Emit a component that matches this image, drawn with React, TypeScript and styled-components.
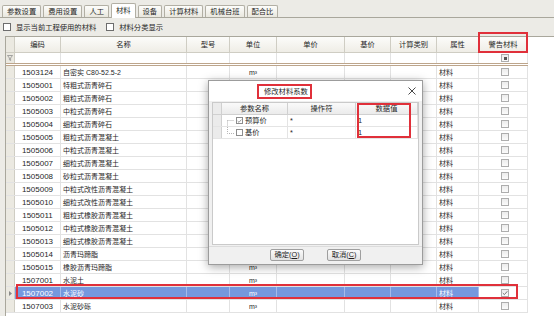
import React from 'react'
import styled, {createGlobalStyle, css} from 'styled-components'

const colors = {
  page: '#ecebe6',
  text: '#1f1f1f',
  gridLine: '#e2e2e2',
  headLine: '#cfcdc3',
  indicator: '#ebe9e1',
  frame: '#a9a79c',
  select: '#7598de',
  red: '#e0303a',
  tan: '#bda58b',
}

const font = `"Liberation Sans", "Noto Sans CJK SC", sans-serif`

const GlobalStyle = createGlobalStyle`
  html, body {
    margin: 0;
    padding: 0;
    background: ${colors.page};
  }
  body {
    font-family: ${font};
    font-size: 7.3px;
    color: ${colors.text};
  }
`

const Screen = styled.div`
  position: relative;
  width: 554px;
  height: 316px;
  overflow: hidden;
  display: flex;
  flex-direction: column;
  background: ${colors.page};
`

// ---- tabs ----
const TabStrip = styled.div`
  display: flex;
  align-items: flex-end;
  gap: 2px;
  height: 17px;
  padding-left: 2px;
  border-bottom: 1px solid ${colors.frame};
  flex: none;
`

const Tab = styled.div<{$active?: boolean}>`
  position: relative;
  height: ${_ => (_.$active ? 15 : 12)}px;
  line-height: ${_ => (_.$active ? 14 : 12)}px;
  padding: 0 4px;
  box-sizing: border-box;
  border: 1px solid #b2afa4;
  border-bottom: none;
  border-radius: 2px 2px 0 0;
  background: ${_ => (_.$active ? '#ffffff' : 'linear-gradient(#fdfdfb, #e9e7de)')};
  margin-bottom: ${_ => (_.$active ? -1 : 0)}px;
  white-space: nowrap;
`

// ---- option bar ----
const OptionBar = styled.div`
  display: flex;
  align-items: center;
  gap: 10px;
  height: 18px;
  padding-left: 3px;
  flex: none;
`

const Option = styled.label`
  display: flex;
  align-items: center;
  gap: 5px;
  white-space: nowrap;
`

const Box = styled.span`
  width: 8px;
  height: 8px;
  box-sizing: border-box;
  border: 1px solid #6d6d6d;
  background: #fff;
  flex: none;
`

// ---- main grid ----
const Grid = styled.div`
  flex: 1;
  margin-left: 5px;
  background: #fff;
  border-top: 1px solid ${colors.frame};
  border-left: 1px solid ${colors.frame};
  display: flex;
  flex-direction: column;
`

const HeadRow = styled.div`
  display: flex;
  width: 522px;
  height: 16px;
  box-sizing: border-box;
  border-bottom: 1px solid ${colors.headLine};
  background: linear-gradient(#fcfcfa, #efede6);
`

const HeadCell = styled.div<{$w: number; $mark?: boolean}>`
  position: relative;
  flex: none;
  width: ${_ => _.$w}px;
  box-sizing: border-box;
  border-right: 1px solid ${colors.headLine};
  text-align: center;
  line-height: 15px;
  white-space: nowrap;
  ${_ =>
    _.$mark &&
    css`
      &::after {
        content: '';
        position: absolute;
        left: -1px;
        right: -1px;
        top: -5px;
        bottom: -1px;
        border: 2px solid ${colors.red};
      }
    `}
`

const FilterRow = styled.div`
  display: flex;
  width: 522px;
  height: 13px;
  box-sizing: border-box;
  border-bottom: 3px double ${colors.tan};
`

const Row = styled.div<{$sel?: boolean}>`
  position: relative;
  display: flex;
  width: 522px;
  height: 13px;
  box-sizing: border-box;
  border-bottom: 1px solid ${colors.gridLine};
  ${_ =>
    _.$sel &&
    css`
      &::after {
        content: '';
        position: absolute;
        left: 10px;
        right: 10px;
        top: -3px;
        bottom: 0;
        border: 2px solid ${colors.red};
      }
    `}
`

const Cell = styled.div<{$w: number; $align?: 'left' | 'center'; $hi?: boolean; $size?: number}>`
  flex: none;
  width: ${_ => _.$w}px;
  box-sizing: border-box;
  padding: 0 2px;
  border-right: 1px solid ${_ => (_.$hi ? '#a5bbec' : colors.gridLine)};
  background: ${_ => (_.$hi ? colors.select : 'transparent')};
  color: ${_ => (_.$hi ? '#ffffff' : colors.text)};
  font-size: ${_ => _.$size ?? 7}px;
  line-height: 13px;
  text-align: ${_ => _.$align ?? 'left'};
  white-space: nowrap;
  overflow: hidden;
`

const IndCell = styled.div`
  flex: none;
  width: 9px;
  box-sizing: border-box;
  background: ${colors.indicator};
  border-right: 1px solid ${colors.headLine};
  display: flex;
  align-items: center;
  justify-content: center;
`

const CheckCell = styled.div`
  flex: none;
  width: 49px;
  box-sizing: border-box;
  border-right: 1px solid ${colors.gridLine};
  display: flex;
  align-items: center;
  justify-content: center;
  padding-left: 4px;
`

const MiniBox = styled.span`
  width: 8px;
  height: 8px;
  box-sizing: border-box;
  border: 1px solid #adadad;
  background: linear-gradient(#ececec, #fbfbfb);
  display: flex;
  align-items: center;
  justify-content: center;
`

const Dot = styled.span`
  width: 3px;
  height: 3px;
  background: #555;
`

// ---- dialog ----
const Dialog = styled.div`
  position: absolute;
  left: 208px;
  top: 80px;
  width: 215px;
  height: 185px;
  box-sizing: border-box;
  border: 1px solid #9c9c9c;
  background: #f0f0f0;
  box-shadow: 0 2px 9px rgba(0, 0, 0, 0.35);
  display: flex;
  flex-direction: column;
`

const TitleBar = styled.div`
  height: 20px;
  flex: none;
  display: flex;
  align-items: center;
  padding-left: 48px;
  padding-right: 6px;
  background: #fff;
`

const Title = styled.span`
  height: 15px;
  line-height: 11px;
  padding: 0 2px 0 5px;
  box-sizing: border-box;
  border: 2px solid ${colors.red};
  font-size: 7.3px;
`

const Close = styled.span`
  margin-left: auto;
  display: flex;
`

const DlgBody = styled.div`
  flex: 1;
  padding: 1px 3px 1px 3px;
  display: flex;
`

const DlgGrid = styled.div`
  flex: 1;
  background: #fff;
  border: 1px solid #cacaca;
  display: flex;
  flex-direction: column;
`

const DlgHead = styled.div`
  display: flex;
  height: 12px;
  flex: none;
  box-sizing: border-box;
  border-bottom: 1px solid #d0d0d0;
  background: linear-gradient(#fafafa, #ebebeb);
`

const DlgHeadCell = styled.div<{$w: number; $mark?: boolean}>`
  position: relative;
  z-index: 1;
  flex: none;
  width: ${_ => _.$w}px;
  box-sizing: border-box;
  border-right: 1px solid #d0d0d0;
  text-align: center;
  line-height: 11px;
  ${_ =>
    _.$mark &&
    css`
      &::after {
        content: '';
        position: absolute;
        left: 1px;
        width: 54px;
        top: 0;
        height: 35px;
        box-sizing: border-box;
        border: 2px solid ${colors.red};
      }
    `}
`

const DlgRow = styled.div`
  display: flex;
  height: 12px;
  flex: none;
  box-sizing: border-box;
  border-bottom: 1px solid #e4e4e4;
`

const DlgCell = styled.div<{$w: number}>`
  flex: none;
  width: ${_ => _.$w}px;
  box-sizing: border-box;
  border-right: 1px solid #e4e4e4;
  padding-left: 2px;
  line-height: 11px;
  display: flex;
  align-items: center;
`

const DlgInd = styled.div`
  flex: none;
  width: 9px;
  box-sizing: border-box;
  background: #ebebeb;
  border-right: 1px solid #d0d0d0;
`

const TreeBox = styled.span`
  width: 7px;
  height: 7px;
  box-sizing: border-box;
  border: 1px solid #8d8d8d;
  background: #fff;
  margin: 0 2px 0 1px;
  display: flex;
  align-items: center;
  justify-content: center;
  flex: none;
`

const Footer = styled.div`
  height: 18px;
  flex: none;
  box-sizing: border-box;
  border-top: 1px solid #dcdcdc;
  display: flex;
  align-items: center;
  justify-content: center;
  gap: 23px;
  padding-bottom: 1px;
`

const Button = styled.button`
  width: 34px;
  height: 12px;
  padding: 0;
  box-sizing: border-box;
  border: 1px solid #9f9f9f;
  border-radius: 2px;
  background: linear-gradient(#fbfbfb, #e3e3e3);
  font-family: ${font};
  font-size: 7.3px;
  line-height: 10px;
  color: ${colors.text};
`

// ---- icons ----
const Funnel = () => (
  <svg width="6" height="6" viewBox="0 0 6 6">
    <path d="M0.5 0.5H5.5L3.6 3V5.5L2.4 4.8V3Z" fill="none" stroke="#909090" strokeWidth="0.8" />
  </svg>
)

const Tick = ({c = '#555'}: {c?: string}) => (
  <svg width="6" height="6" viewBox="0 0 6 6">
    <path d="M0.8 3.1L2.4 4.6L5.3 1.3" fill="none" stroke={c} strokeWidth="0.9" />
  </svg>
)

const Arrow = () => (
  <svg width="3" height="5" viewBox="0 0 3 5">
    <path d="M0 0L3 2.5L0 5Z" fill="#8a8a8a" />
  </svg>
)

const Cross = () => (
  <svg width="8" height="8" viewBox="0 0 8 8">
    <path d="M0.5 0.5L7.5 7.5M7.5 0.5L0.5 7.5" stroke="#333" strokeWidth="0.9" />
  </svg>
)

const Branch = ({first}: {first?: boolean}) => (
  <svg width="9" height="11" viewBox="0 0 9 11" style={{flex: 'none', marginLeft: 2}}>
    <path
      d={first ? 'M1.5 5.5H8M1.5 5.5V11' : 'M1.5 0V6.5H8'}
      fill="none"
      stroke="#a0a0a0"
      strokeWidth="0.8"
      strokeDasharray="1 1"
    />
  </svg>
)

// ---- data ----
const tabs = ['参数设置', '费用设置', '人工', '材料', '设备', '计算材料', '机械台班', '配合比']

const columns = [
  {title: '编码', w: 46},
  {title: '名称', w: 126},
  {title: '型号', w: 43},
  {title: '单位', w: 47},
  {title: '单价', w: 68},
  {title: '基价', w: 46},
  {title: '计算类别', w: 46},
  {title: '属性', w: 42},
]

const rows: [string, string][] = [
  ['1503124', '自密实 C80-52.5-2'],
  ['1505001', '特粗式沥青碎石'],
  ['1505002', '粗粒式沥青碎石'],
  ['1505003', '中粒式沥青碎石'],
  ['1505004', '细粒式沥青碎石'],
  ['1505005', '粗粒式沥青混凝土'],
  ['1505006', '中粒式沥青混凝土'],
  ['1505007', '细粒式沥青混凝土'],
  ['1505008', '砂粒式沥青混凝土'],
  ['1505009', '中粒式改性沥青混凝土'],
  ['1505010', '细粒式改性沥青混凝土'],
  ['1505011', '粗粒式橡胶沥青混凝土'],
  ['1505012', '中粒式橡胶沥青混凝土'],
  ['1505013', '细粒式橡胶沥青混凝土'],
  ['1505014', '沥青玛蹄脂'],
  ['1505015', '橡胶沥青玛蹄脂'],
  ['1507001', '水泥土'],
  ['1507002', '水泥砂'],
  ['1507003', '水泥砂砾'],
]

const SELECTED = '1507002'

const params = [
  {name: '预算价', on: true},
  {name: '基价', on: false},
]

function MaterialGrid() {
  return (
    <Grid>
      <HeadRow>
        <IndCell />
        {columns.map(c => (
          <HeadCell key={c.title} $w={c.w}>
            {c.title}
          </HeadCell>
        ))}
        <HeadCell $w={49} $mark>
          警告材料
        </HeadCell>
      </HeadRow>
      <FilterRow>
        <IndCell>
          <Funnel />
        </IndCell>
        {columns.map(c => (
          <Cell key={c.title} $w={c.w} />
        ))}
        <CheckCell>
          <MiniBox>
            <Dot />
          </MiniBox>
        </CheckCell>
      </FilterRow>
      {rows.map(([code, name]) => {
        const sel = code === SELECTED
        return (
          <Row key={code} $sel={sel}>
            <IndCell>{sel && <Arrow />}</IndCell>
            <Cell $w={46} $align="center" $size={8} $hi={sel}>
              {code}
            </Cell>
            <Cell $w={126} $hi={sel}>
              {name}
            </Cell>
            <Cell $w={43} $hi={sel} />
            <Cell $w={47} $align="center" $hi={sel}>
              m³
            </Cell>
            <Cell $w={68} $hi={sel} />
            <Cell $w={46} $hi={sel} />
            <Cell $w={46} $hi={sel} />
            <Cell $w={42} $hi={sel}>
              材料
            </Cell>
            <CheckCell>
              <MiniBox>{sel && <Tick c="#666" />}</MiniBox>
            </CheckCell>
          </Row>
        )
      })}
    </Grid>
  )
}

function CoefficientDialog() {
  return (
    <Dialog>
      <TitleBar>
        <Title>修改材料系数</Title>
        <Close>
          <Cross />
        </Close>
      </TitleBar>
      <DlgBody>
        <DlgGrid>
          <DlgHead>
            <DlgInd />
            <DlgHeadCell $w={66}>参数名称</DlgHeadCell>
            <DlgHeadCell $w={68}>操作符</DlgHeadCell>
            <DlgHeadCell $w={62} $mark>
              数据值
            </DlgHeadCell>
          </DlgHead>
          {params.map((p, i) => (
            <DlgRow key={p.name}>
              <DlgInd />
              <DlgCell $w={66}>
                <Branch first={i === 0} />
                <TreeBox>{p.on && <Tick c="#777" />}</TreeBox>
                {p.name}
              </DlgCell>
              <DlgCell $w={68}>*</DlgCell>
              <DlgCell $w={62}>1</DlgCell>
            </DlgRow>
          ))}
        </DlgGrid>
      </DlgBody>
      <Footer>
        <Button>
          确定(<u>O</u>)
        </Button>
        <Button>
          取消(<u>C</u>)
        </Button>
      </Footer>
    </Dialog>
  )
}

export default function App() {
  return (
    <>
      <GlobalStyle />
      <Screen>
        <TabStrip>
          {tabs.map(t => (
            <Tab key={t} $active={t === '材料'}>
              {t}
            </Tab>
          ))}
        </TabStrip>
        <OptionBar>
          <Option>
            <Box />
            显示当前工程使用的材料
          </Option>
          <Option>
            <Box />
            材料分类显示
          </Option>
        </OptionBar>
        <MaterialGrid />
        <CoefficientDialog />
      </Screen>
    </>
  )
}
